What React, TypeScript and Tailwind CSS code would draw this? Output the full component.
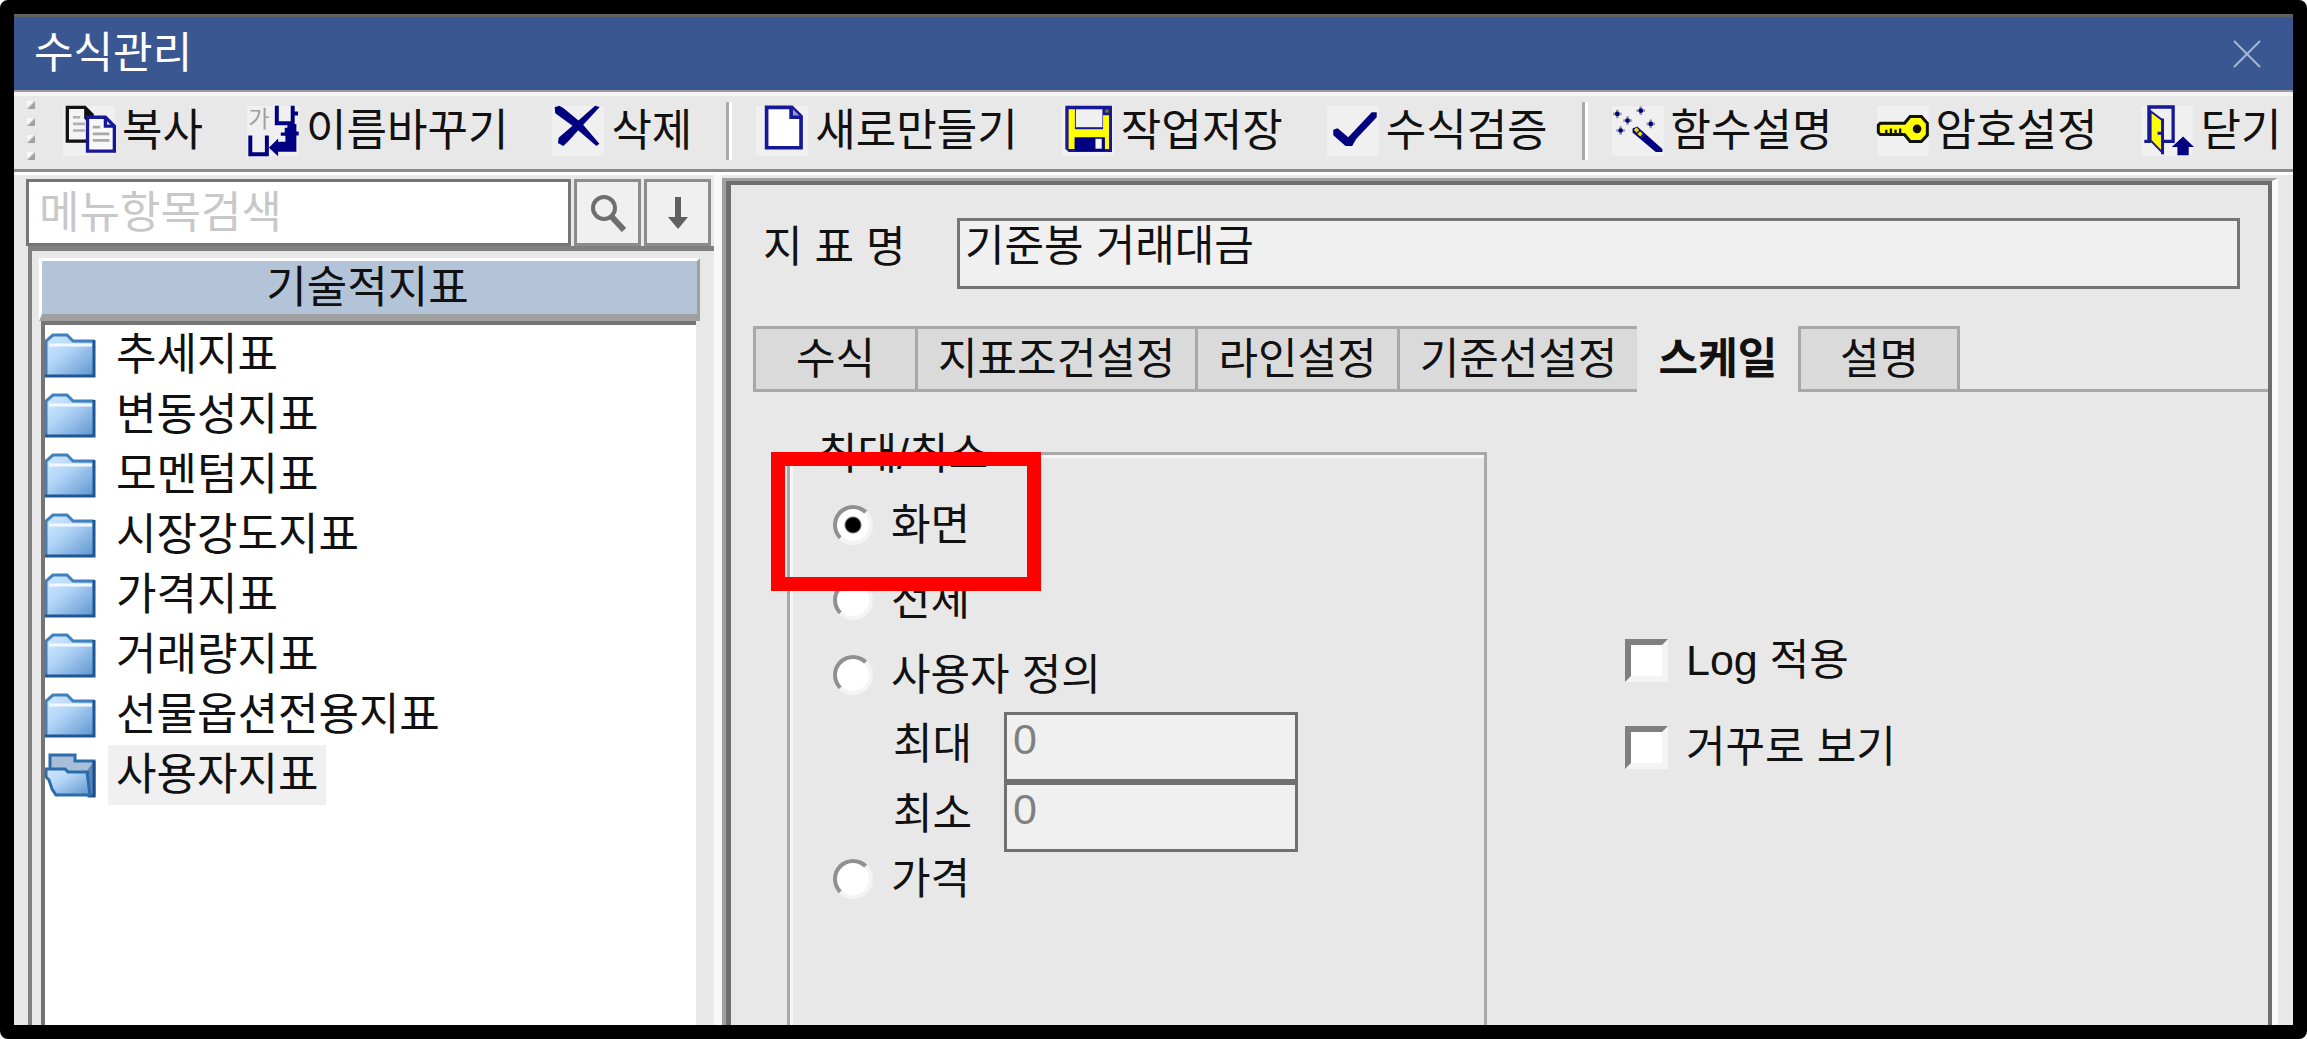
import { useState } from "react";
import type { ReactNode } from "react";

const FONT = "font-['Liberation_Sans','Noto_Sans_CJK_KR',sans-serif]";

interface ToolItem {
  label: string;
  icon: ReactNode;
  divider?: boolean;
}

const NAVY = "#000080";
const LINE = "#17179a";

const CopyIcon = () => (
  <>
    <path d="M1.3 1H6.6L8.8 3.2V11.2H1.3Z" fill="#f4f4f4" stroke="#111" />
    <path d="M6.4 .6L9.4 3.6V5H7L6.4 4.4Z" fill="#111" />
    <path d="M3 4H5.2M3 6H6.6M3 8H6.6" stroke="#b0b0b0" strokeWidth=".8" />
    <path d="M7.4 4H12.8L15.5 6.7V14.2H7.4Z" fill="#f8f8f8" stroke={LINE} />
    <path d="M12.8 4V6.7H15.5" fill="none" stroke={LINE} />
    <path d="M9 7H11.2M9 9H14M9 11H14" stroke="#a8a8a8" strokeWidth=".8" />
  </>
);

const RenameIcon = () => (
  <>
    <text x=".4" y="7" fontSize="7" fill="#a0a0a0">가</text>
    <path d="M9 .5V5.8H13.8M13.8 .5V9M13.8 2.9H15.4M13.8 8.9H15.6" fill="none" stroke={NAVY} strokeWidth="1.2" />
    <path d="M1 9.5V15.2H6V9.5" fill="none" stroke={NAVY} strokeWidth="1.2" />
    <path d="M12.2 6H14.9V14.4H9.4V15.8L6.6 13.2L9.4 10.4V11.4H11.6V9.6H10.2V8.6H11.4V7.2H12.2Z" fill={NAVY} />
  </>
);

const DeleteIcon = () => (
  <>
    <path d="M.8 1L2.2 .5L3.4 1.2L9 5.8L14.3 12L13.4 12.7L7 7.2L1 2.8Z" fill={NAVY} />
    <path d="M13 .5L14.4 .9L9.3 6.4L5 11.2L3.4 12.7L1.8 11.8L2 10.2L6.2 6.6Z" fill={NAVY} />
  </>
);

const NewIcon = () => (
  <>
    <path d="M3.2 1H10.8L13.6 3.8V13.2H3.2Z" fill="#fff" stroke={LINE} strokeWidth="1.1" />
    <path d="M10.6 1V4H13.6" fill="#99c" stroke={LINE} strokeWidth="1.1" />
  </>
);

const SaveIcon = () => (
  <>
    <path d="M1 .5H15.1V14.5H2L1 13.5Z" fill={LINE} />
    <path d="M2 1.6H3.9V7.6H12.4V3.4H14.2V13.6H12.9V10.1H3.8V13.6H2Z" fill="#ff0" />
    <path d="M4.2 1.6H12.2V7H4.2Z" fill="#f0f0f0" />
    <path d="M3.9 10.1H12.9V14.2H3.9Z" fill={NAVY} />
    <path d="M10.1 10.5H12V13.5H10.1Z" fill="#f4f4f4" />
    <path d="M13 1.7H14.1V2.6H13Z" fill="#77770a" />
  </>
);

const CheckIcon = () => (
  <path d="M1.9 7.8L3.2 7.3L6.4 10L13.5 2.5H15V4L8.8 10.6L7.6 12.7H5.6L1.9 9.4Z" fill={NAVY} />
);

const WandIcon = () => (
  <>
    {[[1.6, 3], [8.7, 2], [4.7, 5], [11.7, 6], [2.6, 8]].map(([x, y]) => (
      <g key={x}>
        <path d={`M${x - 1.3} ${y}H${x + 1.3}M${x} ${y - 1.3}V${y + 1.3}`} stroke="#9a9aa8" strokeWidth=".8" />
        <circle cx={x} cy={y} r=".7" fill={NAVY} />
      </g>
    ))}
    <path d="M6.2 7.4L7.6 6.8L15.2 13.6V14.5H13.2L6.2 8.6Z" fill={NAVY} />
    <path d="M7 7.4L9.2 9.8" stroke="#e8e000" strokeWidth="1.1" strokeDasharray="1.2 .4" />
  </>
);

const KeyIcon = () => (
  <>
    <path d="M1 5.8H8.3L10 3.8H13.4L15.2 5.8V9.4L13.4 11.3H10L8.3 9.2H1L.4 8.6V6.4Z" fill="#ff0" stroke="#111" strokeWidth=".9" />
    <path d="M2.8 8.8V7.8M4.2 8.8V7.4M5.6 8.8V7.8M7 8.8V7.4" stroke="#111" strokeWidth=".7" />
    <circle cx="12.1" cy="7.5" r="1.3" fill="#111" />
  </>
);

const CloseDoorIcon = () => (
  <>
    <path d="M2.4 11.2V.9H9.7V11.3H6.8M1 11.3H3" fill="none" stroke={LINE} />
    <path d="M2.9 2.2L6.4 4.8V14.6L2.9 11Z" fill="#ff0" stroke={LINE} strokeWidth=".6" />
    <path d="M6.5 4.4V15.2M5 8.8H6.5" stroke={LINE} strokeWidth=".9" />
    <path d="M12.7 9.8L16 13H14.4V15.5H11V13H9.3Z" fill={NAVY} />
  </>
);

const tools: ToolItem[] = [
  { label: "복사", icon: <CopyIcon /> },
  { label: "이름바꾸기", icon: <RenameIcon /> },
  { label: "삭제", icon: <DeleteIcon />, divider: true },
  { label: "새로만들기", icon: <NewIcon /> },
  { label: "작업저장", icon: <SaveIcon /> },
  { label: "수식검증", icon: <CheckIcon />, divider: true },
  { label: "함수설명", icon: <WandIcon /> },
  { label: "암호설정", icon: <KeyIcon /> },
  { label: "닫기", icon: <CloseDoorIcon /> },
];

const categories = [
  "추세지표",
  "변동성지표",
  "모멘텀지표",
  "시장강도지표",
  "가격지표",
  "거래량지표",
  "선물옵션전용지표",
  "사용자지표",
];

const tabs = ["수식", "지표조건설정", "라인설정", "기준선설정", "스케일", "설명"];

const FolderIcon = ({ open }: { open: boolean }) => (
  <svg viewBox="0 0 51 45" className="h-[45px] w-[51px] shrink-0">
    <defs>
      <linearGradient id="folder" x1="0" y1="0" x2="1" y2="1">
        <stop offset="0" stopColor="#d4e9ff" />
        <stop offset=".4" stopColor="#b4d6f8" />
        <stop offset="1" stopColor="#5b93cc" />
      </linearGradient>
    </defs>
    {open ? (
      <>
        <path d="M5 20V2H30V8H49V42H44" fill="#a9bfd8" stroke="#2b6cac" strokeWidth="3" />
        <path d="M49 8V43H44L42 18" fill="#5c86b5" stroke="#1c4f8b" strokeWidth="3" />
        <path d="M1 16H20L23 19H42L45 42H11L7 36L4 27L1 24Z" fill="url(#folder)" stroke="#2b6cac" strokeWidth="3" />
      </>
    ) : (
      <>
        <path d="M1 8L8 2H22L28 8H50V43H1Z" fill="url(#folder)" />
        <path d="M4 12H47" stroke="#f2f8ff" strokeWidth="3" />
        <path d="M1 43V8L8 2H22L28 8H49" fill="none" stroke="#3f80c0" strokeWidth="3" />
        <path d="M49 7V43H0" fill="none" stroke="#1f5796" strokeWidth="3" />
      </>
    )}
  </svg>
);

const Toolbar = () => (
  <div className="flex h-[82px] shrink-0 items-center border-t-2 border-b-[3px] border-t-[#9a9a9a] border-b-[#8c8c8c] bg-[#e8e8e8] pl-[13px] shadow-[inset_0_4px_0_#f4f4f4]">
    <div className="mr-[28px] flex flex-col gap-[9px]">
      {[0, 1, 2, 3].map((dot) => (
        <span key={dot} className="size-2 bg-linear-to-br from-[#f8f8f8] from-40% to-[#a0a0a0] to-60%" />
      ))}
    </div>
    {tools.map((tool) => (
      <div key={tool.label} className="flex shrink-0 items-center">
        <button type="button" className="flex items-center gap-[6px] whitespace-nowrap">
          <svg viewBox="0 0 16 16" className="size-[53px] shrink-0 overflow-visible">
            <rect x="0" y=".6" width="15.6" height="15" fill="#f0f0f0" />
            {tool.icon}
          </svg>
          {tool.label}
        </button>
        {tool.divider ? (
          <span className="mr-6 ml-[34px] h-[58px] w-[6px] border-r-[3px] border-l-[3px] border-r-white border-l-[#a8a8a8]" />
        ) : (
          <span className="w-11" />
        )}
      </div>
    ))}
  </div>
);

const Sidebar = () => {
  const [selected, setSelected] = useState("사용자지표");

  return (
    <aside className="flex w-[708px] shrink-0 flex-col border-r-8 border-[#f8f8f8] pt-1 pl-3">
      <div className="flex h-[67px] gap-[3px] pr-[3px]">
        <input
          type="text"
          aria-label="메뉴항목검색"
          placeholder="메뉴항목검색"
          className="min-w-0 flex-1 border-[3px] border-[#757575] bg-white px-[10px] placeholder:text-[#c8c8c8]"
        />
        <button type="button" aria-label="검색" className="flex w-[67px] items-center justify-center border-[3px] border-[#8c8c8c] bg-[#f0f0f0]">
          <svg viewBox="0 0 38 38" className="size-[38px]">
            <circle cx="15" cy="14" r="11" fill="none" stroke="#6e6e6e" strokeWidth="4" />
            <path d="M22 22L35 36" stroke="#6e6e6e" strokeWidth="6" />
          </svg>
        </button>
        <button type="button" aria-label="아래로" className="flex w-[67px] items-center justify-center border-[3px] border-[#8c8c8c] bg-[#f0f0f0]">
          <svg viewBox="0 0 22 32" className="h-8 w-[22px]">
            <path d="M8 0H14V20H21L11 32L1 20H8Z" fill="#606060" />
          </svg>
        </button>
      </div>
      <div className="ml-[2px] flex min-h-0 flex-1 flex-col border-t-[5px] border-l-[4px] border-t-[#808080] border-l-[#808080] pt-[7px] pr-[14px] pl-[7px]">
        <div className="flex h-[63px] shrink-0 items-center justify-center border-t-[3px] border-r-[3px] border-b-[7px] border-l-[3px] border-t-white border-r-[#a0a0a0] border-b-[#a0a0a0] border-l-white bg-[#b4c4d8] pr-1">
          기술적지표
        </div>
        <ul className="mr-1 ml-[2px] min-h-0 flex-1 overflow-hidden border-t-[4px] border-l-[4px] border-[#757575] bg-white">
          {categories.map((name) => (
            <li key={name}>
              <button type="button" onClick={() => setSelected(name)} className="flex h-[60px] items-center">
                <FolderIcon open={name === selected} />
                <span className={name === selected ? "ml-3 bg-[#f0f0f0] px-2 leading-[60px]" : "ml-3 px-2 leading-[60px]"}>
                  {name}
                </span>
              </button>
            </li>
          ))}
        </ul>
      </div>
    </aside>
  );
};

interface RadioProps {
  label: string;
  value: string;
  onSelect: (label: string) => void;
}

const Radio = ({ label, value, onSelect }: RadioProps) => (
  <label className="flex items-center gap-[18px] leading-[54px]">
    <input
      type="radio"
      name="range"
      checked={value === label}
      onChange={() => onSelect(label)}
      className="size-10 shrink-0 appearance-none rounded-full border-4 border-t-[#909090] border-r-[#f4f4f4] border-b-[#f4f4f4] border-l-[#909090] bg-white checked:bg-[radial-gradient(circle,#000_7px,#fff_9px)]"
    />
    {label}
  </label>
);

const Checkbox = ({ label }: { label: string }) => (
  <label className="flex items-center gap-[18px] leading-[60px]">
    <input
      type="checkbox"
      className="size-[43px] shrink-0 appearance-none border-[6px] border-t-[#808080] border-r-[#f4f4f4] border-b-[#f4f4f4] border-l-[#808080] bg-white checked:bg-black"
    />
    {label}
  </label>
);

const ScalePanel = () => {
  const [range, setRange] = useState("화면");

  return (
    <div className="flex min-h-0 flex-1 pt-[60px] pl-[56px]">
      <fieldset className="relative w-[700px] shrink-0 border-[3px] border-b-0 border-[#a8a8a8]">
        <legend className="relative ml-[14px] flex h-[3px] items-center">
          <span className="bg-[#e8e8e8] px-[14px] leading-[54px]">최대/최소</span>
        </legend>
        <div className="h-full border-t-[3px] border-l-[3px] border-[#f6f6f6] pt-[29px] pl-10">
          <div className="flex h-[75px] items-center">
            <Radio label="화면" value={range} onSelect={setRange} />
          </div>
          <div className="flex h-[75px] items-center">
            <Radio label="전체" value={range} onSelect={setRange} />
          </div>
          <div className="flex h-[75px] items-center">
            <Radio label="사용자 정의" value={range} onSelect={setRange} />
          </div>
          {["최대", "최소"].map((name) => (
            <label key={name} className="flex h-[70px] pl-[60px]">
              <span className="w-[111px] leading-[64px]">{name}</span>
              <input
                type="text"
                defaultValue="0"
                disabled={range !== "사용자 정의"}
                className="w-[294px] border-[3px] border-[#707070] bg-[#f0f0f0] px-[6px] pb-4 disabled:text-[#808080]"
              />
            </label>
          ))}
          <Radio label="가격" value={range} onSelect={setRange} />
        </div>
        <div className="pointer-events-none absolute -top-[3px] -left-[19px] h-[139px] w-[270px] border-[14px] border-[#f00]" />
      </fieldset>
      <div className="mt-[178px] ml-[138px] flex flex-col gap-[27px]">
        <Checkbox label="Log 적용" />
        <Checkbox label="거꾸로 보기" />
      </div>
    </div>
  );
};

const Editor = () => {
  const [active, setActive] = useState("스케일");

  return (
    <main className="mt-[3px] mr-[15px] flex min-w-0 flex-1 flex-col border-t-[3px] border-r-[6px] border-l-[4px] border-t-[#a0a0a0] border-r-[#fafafa] border-l-[#a0a0a0] text-[43px]">
      <div className="flex min-h-0 flex-1 flex-col border-t-[4px] border-r-[4px] border-l-[5px] border-[#6e6e6e] pt-[33px]">
        <label className="flex h-[71px] shrink-0 pr-[28px] pl-[32px]">
          <span className="w-[194px] leading-[58px]">지 표 명</span>
          <input
            type="text"
            defaultValue="기준봉 거래대금"
            className="min-w-0 flex-1 border-[3px] border-[#757575] bg-[#f0f0f0] px-[5px] pb-6"
          />
        </label>
        <div role="tablist" className="mt-[37px] flex h-[66px] shrink-0 pl-[22px]">
          {tabs.map((tab) => (
            <button
              key={tab}
              type="button"
              role="tab"
              aria-selected={tab === active}
              onClick={() => setActive(tab)}
              className={
                tab === active
                  ? "w-[161px] bg-[#e8e8e8] text-center font-bold whitespace-nowrap"
                  : "min-w-[162px] border-[3px] border-r-0 border-[#a8a8a8] bg-[#dadada] px-[20px] whitespace-nowrap last-of-type:border-r-[3px]"
              }
            >
              {tab}
            </button>
          ))}
          <div className="flex-1 border-b-[3px] border-[#a8a8a8]" />
        </div>
        <ScalePanel />
      </div>
    </main>
  );
};

export default function App() {
  return (
    <div className={`flex h-screen flex-col overflow-hidden rounded-lg border-[14px] border-black bg-[#e8e8e8] text-[44px] leading-none text-[#111] ${FONT}`}>
      <header className="flex h-[76px] shrink-0 items-center justify-between border-t-[3px] border-[#606060] bg-[#3a5792] pr-8 pl-5 text-[43px] text-white">
        <h1>수식관리</h1>
        <button type="button" aria-label="창 닫기">
          <svg viewBox="0 0 28 28" className="size-7">
            <path d="M1 1L27 27M27 1L1 27" stroke="#a5b8d4" strokeWidth="2" />
          </svg>
        </button>
      </header>
      <Toolbar />
      <div className="flex min-h-0 flex-1 border-t-[3px] border-white">
        <Sidebar />
        <Editor />
      </div>
    </div>
  );
}
